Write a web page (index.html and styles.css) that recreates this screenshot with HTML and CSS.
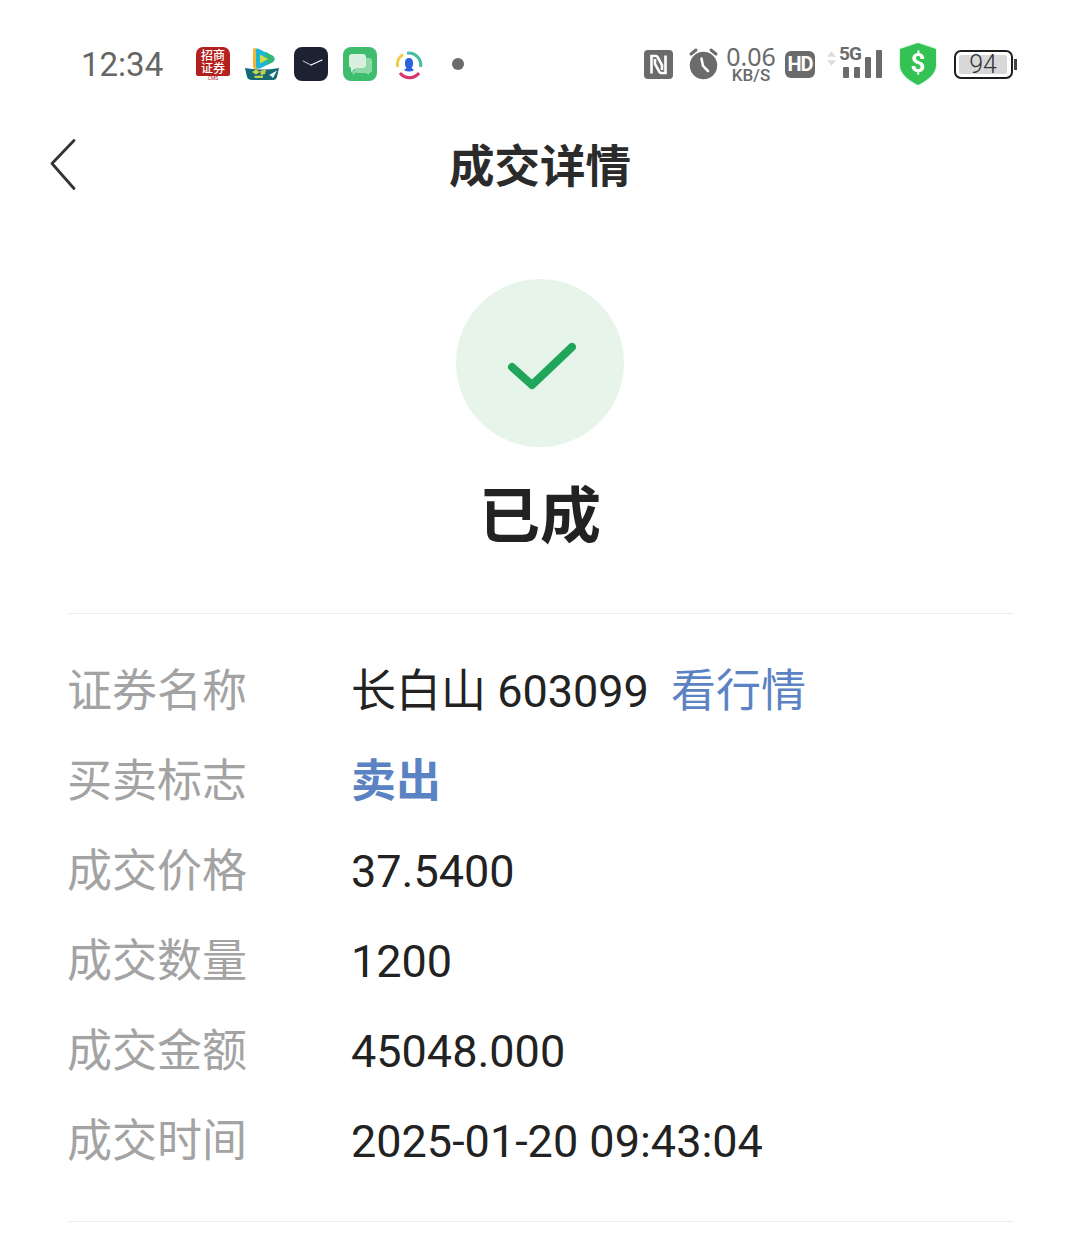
FILE: index.html
```html
<!DOCTYPE html>
<html lang="zh">
<head>
<meta charset="utf-8">
<title>成交详情</title>
<link rel="stylesheet" href="styles.css">
</head>
<body>
<div class="statusbar">
  <div class="status-left">
    <span class="time">12:34</span>
    <div class="notif-icons">
      <div class="app app-zs"><span class="zs-box">招商证券</span><span class="zs-sub">CMS</span></div>
      <svg class="app" viewBox="0 0 34 34"><path d="M8 3 Q8 1 10 1 L27 9 Q31 12 27 15 L13 22 Q8 23 8 19 Z" fill="#f3b437"/><path d="M11 2.5 Q11 1 13 1.5 L28 9 Q31 12 28 15 L15 21.5 Q11 22 11 19 Z" fill="#1fb6d8"/><path d="M21 5 L28 9 Q31 12 28 15 L22 18 Z" fill="#35b874"/><path d="M15 7.5 L23 12 L15 16.5 Z" fill="#cfe23c"/><path d="M0 21 Q17 24 34 21 L32 30 Q31 33 28 33 H7 Q3 33 2 30 Z" fill="#176a73"/><path d="M7 25 L11 22.5 L15 25 L11 27.5 Z M15 24 L21 22.5 L20 27 L16 28 Z M9 29 L18 28.5 L18 31 L10 31 Z" fill="#c6d24c"/><path d="M24 28 L32 23.5 L28 31 L26 29 Z" fill="#e6f4f2"/></svg>
      <svg class="app" viewBox="0 0 34 34"><rect width="34" height="34" rx="8" fill="#1d2233"/><path d="M17 18 L28 13" stroke="#fff" stroke-width="1.2" stroke-linecap="round"/><path d="M17 18 L9 14" stroke="#cfd2da" stroke-width="1" stroke-linecap="round"/></svg>
      <svg class="app" viewBox="0 0 34 34"><rect width="34" height="34" rx="8" fill="#3ebd6c"/><rect x="12" y="11" width="17" height="15" rx="3" fill="#8fd8a8"/><path d="M9 24 L14 24 L10 28 Z M26 24 L26 28 L21 25 Z" fill="#8fd8a8"/><path d="M6 10 Q6 7 9 7 H20 Q23 7 23 10 V18 Q23 21 20 21 H13 L8 25 V21 Q6 20.5 6 18 Z" fill="#d8f1df"/></svg>
      <svg class="app" viewBox="0 0 34 34"><path d="M5.5 20 A12 12 0 0 1 11 7.5" fill="none" stroke="#f1cb45" stroke-width="3"/><path d="M15 6.2 A12 12 0 0 1 28.6 20" fill="none" stroke="#46bfa6" stroke-width="3"/><path d="M8 26 A12 12 0 0 0 27 26" fill="none" stroke="#d6386c" stroke-width="3"/><path d="M17 11 Q21 11 21 16 Q21 20 19.5 21 L22 23 Q20 24.5 17 24.5 Q14 24.5 12 23 L14.5 21 Q13 20 13 16 Q13 11 17 11 Z" fill="#2a62e0"/></svg>
      <span class="dot"></span>
    </div>
  </div>
  <div class="status-right">
    <svg class="ic-nfc" viewBox="0 0 29 29"><rect width="29" height="29" rx="4" fill="#6b6b6b"/><path d="M7.5 23.5 V6 H12 Q13 6 13.5 7 L18 15 V20 M21.5 5.5 V23 H17 Q16 23 15.5 22 L11 14 V9" fill="none" stroke="#fff" stroke-width="2.6"/></svg>
    <svg class="ic-alarm" viewBox="0 0 32 34"><circle cx="15.5" cy="18.5" r="13.7" fill="#6b6b6b"/><path d="M3 7 L8 3 M28 7 L23 3" stroke="#6b6b6b" stroke-width="3" stroke-linecap="round"/><path d="M13.5 11.5 L15 19 L20 24" fill="none" stroke="#fff" stroke-width="2.5" stroke-linecap="round"/></svg>
    <div class="speed"><span class="speed-num">0.06</span><span class="speed-unit">KB/S</span></div>
    <span class="hd">HD</span>
    <div class="signal">
      <svg class="updown" viewBox="0 0 10 16"><path d="M5 0 L10 6 H0 Z M5 16 L10 10 H0 Z" fill="#dcdcdc"/></svg>
      <span class="fiveg">5G</span>
      <div class="bars"><i class="b1"></i><i class="b2"></i><i class="b3"></i><i class="b4"></i></div>
    </div>
    <svg class="ic-shield" viewBox="0 0 38 42"><path d="M19 0 L37 6 V22 Q37 33 19 42 Q1 33 1 22 V6 Z" fill="#34c254"/><text x="19" y="29" class="shield-t">$</text></svg>
    <div class="battery"><div class="batt-body"><div class="batt-fill">94</div></div><span class="batt-cap"></span></div>
  </div>
</div>

<header class="nav">
  <svg class="back" viewBox="0 0 30 54"><path d="M25 2.5 L3 25.5 L25 50.5" fill="none" stroke="#333" stroke-width="2.8" stroke-linejoin="round" stroke-linecap="round"/></svg>
  <h1 class="title">成交详情</h1>
</header>

<section class="result">
  <div class="check-circle">
    <svg class="check" viewBox="0 0 70 50"><path d="M6 26 L26 44 L66 6" fill="none" stroke="#1fa65b" stroke-width="8" stroke-linecap="round" stroke-linejoin="round"/></svg>
  </div>
  <div class="status-text">已成</div>
</section>

<section class="details">
  <div class="row"><span class="label">证券名称</span><span class="value">长白山 603099<a class="link">看行情</a></span></div>
  <div class="row"><span class="label">买卖标志</span><span class="value sell">卖出</span></div>
  <div class="row"><span class="label">成交价格</span><span class="value">37.5400</span></div>
  <div class="row"><span class="label">成交数量</span><span class="value">1200</span></div>
  <div class="row"><span class="label">成交金额</span><span class="value">45048.000</span></div>
  <div class="row"><span class="label">成交时间</span><span class="value">2025-01-20 09:43:04</span></div>
</section>
</body>
</html>
```

FILE: styles.css
```css
* { box-sizing: border-box; }
html, body { margin: 0; padding: 0; }
body {
  width: 1080px;
  height: 1241px;
  overflow: hidden;
  background: #fff;
  color: #222;
  font-family: Roboto, "Noto Sans CJK SC", sans-serif;
}
.statusbar {
  height: 128px;
  padding: 0 63px 0 81px;
  display: flex;
  align-items: center;
  justify-content: space-between;
}
.status-left, .status-right { display: flex; align-items: center; }
.time { font-size: 33px; color: #666; width: 115px; }
.notif-icons { display: flex; align-items: center; gap: 15px; }
.app { width: 34px; height: 34px; flex: none; }
.app-zs { display: flex; flex-direction: column; align-items: center; }
.zs-box {
  width: 34px; height: 29px; background: #b3211e; color: #fff; border-radius: 7px 7px 2px 2px;
  font-size: 12px; line-height: 12.5px; font-weight: 500; text-align: center; padding: 2px 3px 0;
  font-family: "Noto Sans CJK SC", sans-serif; word-break: break-all;
}
.zs-sub { font-size: 5px; line-height: 5px; color: #b3211e; }
.dot { width: 12px; height: 12px; border-radius: 50%; background: #6b6b6b; margin-left: 11px; }
.status-right { color: #6b6b6b; }
.ic-nfc { width: 29px; height: 29px; margin-right: 15px; }
.ic-alarm { width: 32px; height: 34px; margin-right: 6px; }
.speed { display: flex; flex-direction: column; align-items: center; width: 50px; margin-right: 9px; }
.speed-num { font-size: 25px; line-height: 22px; font-family: "Noto Sans", sans-serif; }
.speed-unit { font-size: 17px; line-height: 16px; font-weight: 500; }
.hd {
  width: 30px; height: 27px; border-radius: 6px; background: #6b6b6b; color: #fff;
  font-size: 20px; font-weight: 700; line-height: 27px; text-align: center; margin-right: 11px;
  letter-spacing: -1px;
}
.signal { position: relative; width: 57px; height: 34px; margin-right: 16px; }
.updown { position: absolute; left: 1px; top: 4px; width: 9px; height: 15px; }
.fiveg { position: absolute; left: 13px; top: -3px; font-size: 19px; line-height: 20px; font-weight: 700; color: #6b6b6b; letter-spacing: -1px; }
.bars { position: absolute; left: 17px; bottom: 3px; display: flex; align-items: flex-end; gap: 5px; }
.bars i { display: block; width: 6px; background: #6b6b6b; border-radius: 1px; }
.b1 { height: 11px; } .b2 { height: 11px; } .b3 { height: 21px; } .b4 { height: 28px; }
.ic-shield { width: 38px; height: 42px; margin-right: 17px; filter: drop-shadow(0 0 1px #a8eeb8); }
.shield-t { fill: #fff; font-size: 26px; font-weight: 700; text-anchor: middle; font-family: Roboto, sans-serif; }
.battery { display: flex; align-items: center; }
.batt-body { width: 59px; height: 29px; border: 2.5px solid #1e1e1e; border-radius: 7px; padding: 3px; }
.batt-fill { height: 100%; width: 48px; background: #d8d8d8; border-radius: 2px; font-size: 25px; font-weight: 300; line-height: 19px; text-align: center; color: #333; }
.batt-cap { width: 3px; height: 11px; background: #444; margin-left: 1px; }

.nav { position: relative; height: 76px; padding-bottom: 5px; display: flex; align-items: center; justify-content: center; }
.back { position: absolute; left: 49px; top: 10px; width: 30px; height: 54px; }
.title { margin: 0; font-size: 45.5px; font-weight: 700; color: #2b2b2b; line-height: 71px; font-family: "Noto Sans CJK SC", sans-serif; }

.result { display: flex; flex-direction: column; align-items: center; margin: 75px 67px 0 68px; padding-right: 1px; height: 335px; border-bottom: 1px solid #ececec; }
.check-circle { width: 168px; height: 168px; border-radius: 50%; background: #e7f4ea; display: flex; align-items: center; justify-content: center; }
.check { width: 70px; height: 50px; margin: 6px 0 0 2px; }
.status-text { margin-top: 25px; font-size: 61px; line-height: 80px; font-weight: 700; color: #222; font-family: "Noto Sans CJK SC", sans-serif; }

.details { margin: 33px 67px 0 68px; padding-bottom: 34px; border-bottom: 1px solid #ececec; }
.row { height: 90px; display: flex; align-items: baseline; font-size: 45px; line-height: 90px; }
.label { width: 284px; margin-left: -1px; color: #a3a3a3; }
.value { color: #222; }
.link { color: #5b83c4; margin-left: 22px; }
.sell { color: #5b83c4; font-weight: 700; }
```
